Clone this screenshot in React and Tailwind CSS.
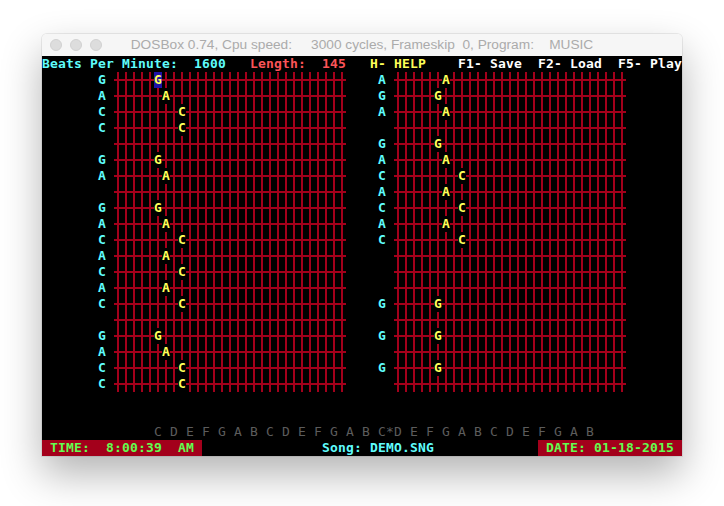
const FG = {
  cyan: "text-[#5ffcfc]",
  yellow: "text-[#fefe58]",
  white: "text-white",
  red: "text-[#fc5458]",
  green: "text-[#62fd50]",
  gray: "text-[#5c5c5c] font-normal",
};

const BG = {
  none: "",
  red: "bg-[#a3001b]",
  blue: "bg-[#1e12a8]",
};

const NOTE_OFFSET = { G: 5, A: 6, C: 8 };

const leftNotes = "GACC-GA-GACACAC-GACC";
const rightNotes = "AGA-GACACAC---G-G-G-";

function blankRow() {
  return Array.from({ length: 80 }, () => ({ c: " ", fg: "white", bg: "none" }));
}

function put(row, col, text, fg, bg = "none") {
  for (let i = 0; i < text.length; i++) row[col + i] = { c: text[i], fg, bg };
}

function buildScreen() {
  const rows = [];

  const head = blankRow();
  put(head, 0, "Beats Per Minute:  1600", "cyan");
  put(head, 26, "Length:  145", "red");
  put(head, 41, "H- HELP", "yellow");
  put(head, 52, "F1- Save  F2- Load  F5- Play", "white");
  rows.push(head);

  for (let r = 0; r < 20; r++) {
    const row = blankRow();
    for (let i = 0; i < 29; i++) {
      row[9 + i] = { grid: true };
      row[44 + i] = { grid: true };
    }
    const l = leftNotes[r];
    if (l !== "-") {
      put(row, 7, l, "cyan");
      put(row, 9 + NOTE_OFFSET[l], l, "yellow", r === 0 ? "blue" : "none");
    }
    const rr = rightNotes[r];
    if (rr !== "-") {
      put(row, 42, rr, "cyan");
      put(row, 44 + NOTE_OFFSET[rr], rr, "yellow");
    }
    rows.push(row);
  }

  rows.push(blankRow());
  rows.push(blankRow());

  const scale = blankRow();
  put(scale, 14, "C D E F G A B C D E F G A B C*D E F G A B C D E F G A B", "gray");
  rows.push(scale);

  const status = blankRow();
  put(status, 0, " TIME:  8:00:39  AM ", "green", "red");
  put(status, 35, "Song: DEMO.SNG", "cyan");
  put(status, 62, " DATE: 01-18-2015 ", "green", "red");
  rows.push(status);

  return rows;
}

function Cell({ cell }) {
  if (cell.grid) {
    return (
      <div className="h-4 w-2 bg-[linear-gradient(to_right,transparent_3px,#a3001b_3px,#a3001b_5px,transparent_5px),linear-gradient(to_bottom,transparent_7px,#a3001b_7px,#a3001b_9px,transparent_9px)]" />
    );
  }
  return (
    <div className={`h-4 w-2 text-center leading-4 whitespace-pre ${FG[cell.fg]} ${BG[cell.bg]}`}>
      {cell.c}
    </div>
  );
}

function Light() {
  return <span className="h-3 w-3 rounded-full border border-[#d2d2d2] bg-[#dddddd]" />;
}

export default function App() {
  const screen = buildScreen();

  return (
    <div className="h-[506px] w-[724px] bg-white pl-[42px] pt-[34px]">
      <div className="w-[640px] rounded-t-[5px] shadow-[0_18px_40px_rgba(0,0,0,0.3),0_0_0_1px_rgba(0,0,0,0.07)]">
        <div className="grid h-[22px] grid-cols-[1fr_auto_1fr] items-center rounded-t-[5px] bg-[#f6f6f6]">
          <div className="flex gap-2 pl-2">
            <Light />
            <Light />
            <Light />
          </div>
          <div className="whitespace-pre font-['Liberation_Sans',sans-serif] text-[13.7px] text-[#ababab]">
            DOSBox 0.74, Cpu speed:     3000 cycles, Frameskip  0, Program:    MUSIC
          </div>
          <div />
        </div>
        <div className="grid grid-cols-[repeat(80,8px)] bg-black font-['DejaVu_Sans_Mono',monospace] text-[13px] font-bold">
          {screen.map((row, r) =>
            row.map((cell, c) => <Cell key={r * 80 + c} cell={cell} />)
          )}
        </div>
      </div>
    </div>
  );
}
